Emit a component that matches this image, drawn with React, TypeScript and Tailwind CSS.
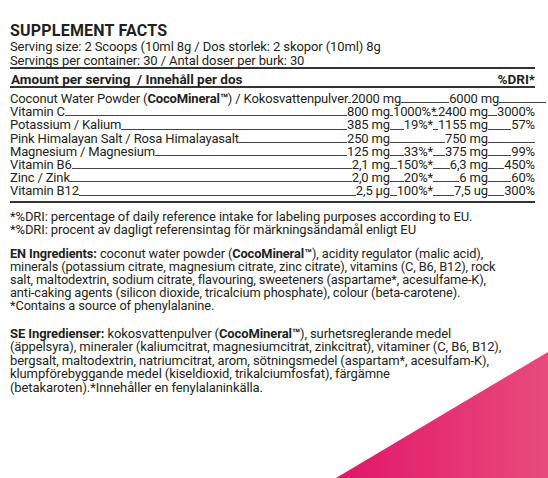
import React from 'react';

type Row = {
  name: React.ReactNode;
  amount: string;
  dri: string;
  amount3: string;
  dri3: string;
};

const rows: Row[] = [
  {
    name: (
      <>
        Coconut Water Powder (<b>CocoMineral™</b>) / Kokosvattenpulver
      </>
    ),
    amount: '2000 mg',
    dri: '',
    amount3: '6000 mg',
    dri3: '',
  },
  { name: 'Vitamin C', amount: '800 mg', dri: '1000%*', amount3: '2400 mg', dri3: '3000%' },
  { name: 'Potassium / Kalium', amount: '385 mg', dri: '19%*', amount3: '1155 mg', dri3: '57%' },
  { name: 'Pink Himalayan Salt / Rosa Himalayasalt', amount: '250 mg', dri: '', amount3: '750 mg', dri3: '' },
  { name: 'Magnesium / Magnesium', amount: '125 mg', dri: '33%*', amount3: '375 mg', dri3: '99%' },
  { name: 'Vitamin B6', amount: '2,1 mg', dri: '150%*', amount3: '6,3 mg', dri3: '450%' },
  { name: 'Zinc / Zink', amount: '2,0 mg', dri: '20%*', amount3: '6 mg', dri3: '60%' },
  { name: 'Vitamin B12', amount: '2,5 µg', dri: '100%*', amount3: '7,5 ug', dri3: '300%' },
];

function Fill() {
  return <span className="flex-1 min-w-[3px] border-b border-[#444] mb-[2px]" />;
}

function Cell({ text, width }: { text: string; width: string }) {
  return (
    <span className={`flex items-end shrink-0 ${width}`}>
      <Fill />
      {text && <span className="whitespace-nowrap">{text}</span>}
    </span>
  );
}

export default function App() {
  return (
    <div className="relative w-[548px] h-[478px] overflow-hidden bg-white text-[#231f20] font-['Roboto',sans-serif]">
      <div className="pt-[22px] pl-[10px] pr-[13px]">
        {/* Heading */}
        <h1 className="text-[16px] leading-[18px] font-bold tracking-[0.2px]">SUPPLEMENT FACTS</h1>
        <div className="text-[13px] leading-[13.5px] tracking-[-0.1px]">
          <p>Serving size: 2 Scoops (10ml 8g / Dos storlek: 2 skopor (10ml) 8g</p>
          <p>Servings per container: 30 / Antal doser per burk: 30</p>
        </div>

        {/* Table */}
        <div className="border-t-2 border-[#333] flex justify-between h-[19px] pt-[1px] leading-[18px] text-[13.5px] font-bold">
          <span className="pl-[1px]">Amount per serving &nbsp;/ Innehåll per dos</span>
          <span>%DRI*</span>
        </div>
        <div className="border-t-2 border-[#333] pt-[4px] pb-[3px] text-[13px] leading-[13.2px] tracking-[-0.15px]">
          {rows.map((row, i) => (
            <div key={i} className="flex items-end">
              <span className="whitespace-nowrap">{row.name}</span>
              <Fill />
              <span className="whitespace-nowrap">{row.amount}</span>
              <Cell text={row.dri} width="w-[43px]" />
              <Cell text={row.amount3} width="w-[55px]" />
              <Cell text={row.dri3} width="w-[47px]" />
            </div>
          ))}
        </div>
        <div className="border-t-2 border-[#333]" />

        {/* Footnotes */}
        <div className="mt-[7px] text-[13px] leading-[13px] tracking-[-0.1px]">
          <p>*%DRI: percentage of daily reference intake for labeling purposes according to EU.</p>
          <p>*%DRI: procent av dagligt referensintag för märkningsändamål enligt EU</p>
        </div>

        <p className="mt-[11px] text-[12.8px] leading-[13px] tracking-[-0.1px]">
          <b>EN Ingredients:</b> coconut water powder (<b>CocoMineral™</b>), acidity regulator (malic acid),
          <br />
          minerals (potassium citrate, magnesium citrate, zinc citrate), vitamins (C, B6, B12), rock
          <br />
          salt, maltodextrin, sodium citrate, flavouring, sweeteners (aspartame*, acesulfame-K),
          <br />
          anti-caking agents (silicon dioxide, tricalcium phosphate), colour (beta-carotene).
          <br />
          *Contains a source of phenylalanine.
        </p>

        <p className="mt-[15px] text-[13px] leading-[13.5px] tracking-[-0.1px]">
          <b>SE Ingredienser:</b> kokosvattenpulver (<b>CocoMineral™</b>), surhetsreglerande medel
          <br />
          (äppelsyra), mineraler (kaliumcitrat, magnesiumcitrat, zinkcitrat), vitaminer (C, B6, B12),
          <br />
          bergsalt, maltodextrin, natriumcitrat, arom, sötningsmedel (aspartam*, acesulfam-K),
          <br />
          klumpförebyggande medel (kiseldioxid, trikalciumfosfat), färgämne
          <br />
          (betakaroten).*Innehåller en fenylalaninkälla.
        </p>
      </div>

      {/* Corner decoration */}
      <svg className="absolute right-0 bottom-0" width="212" height="126" viewBox="0 0 212 126">
        <defs>
          <linearGradient id="pink" x1="0" y1="0" x2="1" y2="0">
            <stop offset="0" stopColor="#e1156a" />
            <stop offset="1" stopColor="#e84b7b" />
          </linearGradient>
        </defs>
        <polygon points="212,0 212,126 0,126" fill="url(#pink)" />
      </svg>
    </div>
  );
}
